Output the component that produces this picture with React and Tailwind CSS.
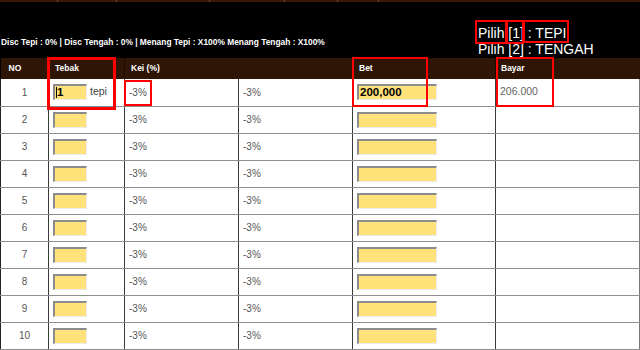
import React from "react";

const rows = Array.from({ length: 10 }, (_, i) => i + 1);

function YellowBox({ w, children }) {
  return (
    <div
      className={`${w} h-[16px] bg-[#ffe27a] border-t-2 border-l-2 border-b border-r border-t-[#8c8c8c] border-l-[#8c8c8c] border-b-[#ececec] border-r-[#ececec] flex items-center pl-[1px] text-[11.5px] font-bold text-black leading-none`}
    >
      {children}
    </div>
  );
}

export default function App() {
  return (
    <div
      className="relative w-[640px] h-[350px] bg-black overflow-hidden"
      style={{ fontFamily: '"Liberation Sans", Arial, sans-serif' }}
    >
      {/* top strip of the menu bar above */}
      <div className="flex h-[2px] bg-[#3a1a06]">
        <div className="w-[58px] border-r border-[#6b4a30]" />
        <div className="w-[59px] border-r border-[#6b4a30]" />
        <div className="w-[93px] border-r border-[#6b4a30]" />
        <div className="w-[75px] border-r border-[#6b4a30]" />
        <div className="w-[53px] border-r border-[#6b4a30]" />
        <div className="w-[41px] border-r border-[#6b4a30]" />
      </div>

      {/* info line + legend */}
      <div className="flex h-[56px]">
        <div className="w-[478px] pt-[35px] pl-[1px] text-[8.4px] leading-[10px] font-bold text-white whitespace-nowrap">
          Disc Tepi : 0% | Disc Tengah : 0% | Menang Tepi : X100% Menang Tengah : X100%
        </div>
        <div className="pt-[23px] text-[14px] leading-[16px] text-white whitespace-nowrap">
          <div>Pilih [1] : TEPI</div>
          <div>Pilih [2] : TENGAH</div>
        </div>
      </div>

      {/* betting table */}
      <table className="table-fixed border-collapse w-[639px] text-[10px]">
        <colgroup>
          <col className="w-[48px]" />
          <col className="w-[76px]" />
          <col className="w-[114px]" />
          <col className="w-[114px]" />
          <col className="w-[143px]" />
          <col className="w-[144px]" />
        </colgroup>
        <thead>
          <tr className="h-[21px] bg-[#2e1505] text-white text-[8.5px] font-bold text-left">
            <th className="pl-[8px] font-bold border-r border-[#1a0b02]">NO</th>
            <th className="pl-[6px] font-bold border-r border-[#1a0b02]">Tebak</th>
            <th colSpan={2} className="pl-[6px] font-bold border-r border-[#1a0b02]">Kei (%)</th>
            <th className="pl-[6px] font-bold border-r border-[#1a0b02]">Bet</th>
            <th className="pl-[5px] font-bold">Bayar</th>
          </tr>
        </thead>
        <tbody>
          {rows.map((n) => (
            <tr key={n} className="h-[27px] bg-white text-[#555]">
              <td className="text-center border-l border-l-[#222] border-r border-r-[#3a3a3a] border-b border-b-[#8f8f8f]">
                {n}
              </td>
              <td className="pl-[4px] border-r border-r-[#3a3a3a] border-b border-b-[#8f8f8f]">
                <div className="flex items-center gap-[3px]">
                  <YellowBox w="w-[34px]">
                    {n === 1 ? (
                      <span className="flex items-center">
                        <span className="w-[1px] h-[11px] bg-black" />1
                      </span>
                    ) : null}
                  </YellowBox>
                  {n === 1 ? <span className="text-[10.5px] text-[#444]">tepi</span> : null}
                </div>
              </td>
              <td className="pl-[4px] border-r border-r-[#3a3a3a] border-b border-b-[#8f8f8f]">-3%</td>
              <td className="pl-[4px] border-r border-r-[#3a3a3a] border-b border-b-[#8f8f8f]">-3%</td>
              <td className="pl-[4px] border-r border-r-[#3a3a3a] border-b border-b-[#8f8f8f]">
                <YellowBox w="w-[80px]">{n === 1 ? "200,000" : null}</YellowBox>
              </td>
              <td className="pl-[4px] border-r border-r-[#777] border-b border-b-[#8f8f8f] text-[10.5px] text-[#666]">
                {n === 1 ? "206.000" : null}
              </td>
            </tr>
          ))}
        </tbody>
      </table>

      {/* highlight boxes */}
      <div className="absolute left-[475px] top-[20px] w-[32px] h-[24px] border-2 border-[#ff0000]" />
      <div className="absolute left-[506px] top-[20px] w-[18px] h-[24px] border-2 border-[#ff0000]" />
      <div className="absolute left-[523px] top-[20px] w-[46px] h-[23px] border-2 border-[#ff0000]" />
      <div className="absolute left-[47px] top-[57px] w-[69px] h-[53px] border-[3px] border-[#ff0000]" />
      <div className="absolute left-[124px] top-[80px] w-[28px] h-[26px] border-2 border-[#ff0000]" />
      <div className="absolute left-[352px] top-[57px] w-[76px] h-[50px] border-2 border-[#ff0000]" />
      <div className="absolute left-[496px] top-[57px] w-[58px] h-[50px] border-2 border-[#ff0000]" />
    </div>
  );
}
